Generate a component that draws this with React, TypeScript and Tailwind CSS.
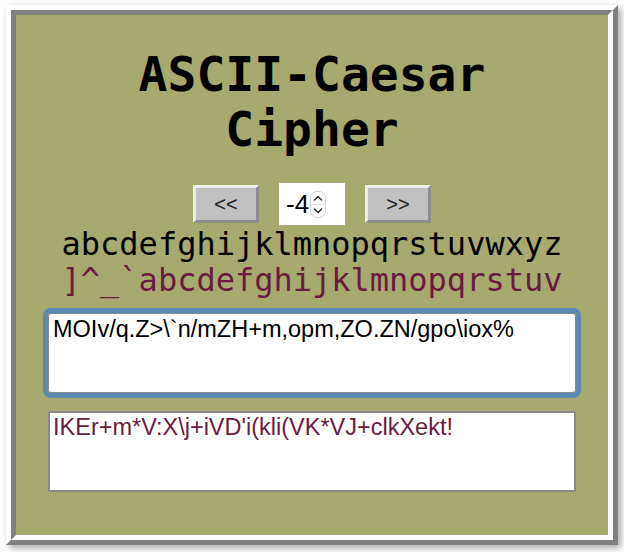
import React from 'react';

const plain = 'abcdefghijklmnopqrstuvwxyz';
const shifted = ']^_`abcdefghijklmnopqrstuv';
const input = 'MOIv/q.Z>\\`n/mZH+m,opm,ZO.ZN/gpo\\iox%';
const output = "IKEr+m*V:X\\j+iVD'i(kli(VK*VJ+clkXekt!";

const Spinner: React.FC = () => (
  <svg width="16" height="27" viewBox="0 0 16 27" fill="none">
    <rect x="0.5" y="0.5" width="15" height="26" rx="6.5" stroke="#d4d4d4" fill="#fff" />
    <line x1="1" y1="13.5" x2="15" y2="13.5" stroke="#e2e2e2" />
    <path d="M4.5 9 L8 5.5 L11.5 9" stroke="#333" strokeWidth="1.6" strokeLinecap="round" strokeLinejoin="round" />
    <path d="M4.5 18 L8 21.5 L11.5 18" stroke="#333" strokeWidth="1.6" strokeLinecap="round" strokeLinejoin="round" />
  </svg>
);

const ShiftButton: React.FC<{ label: string }> = ({ label }) => (
  <button className="w-[66px] h-[38px] bg-[#c0c0c0] border-[3px] border-t-[#ececec] border-l-[#ececec] border-r-[#8e8e8e] border-b-[#8e8e8e] text-[20px] text-[#222] font-['Liberation_Sans',Arial,sans-serif] flex items-center justify-center">
    {label}
  </button>
);

export default function App() {
  return (
    <div className="w-[624px] h-[552px] bg-white pt-[5px] pl-[6px]">
      {/* ridge frame */}
      <div className="w-[612px] h-[540px] border-[5px] border-t-white border-l-white border-r-[#808080] border-b-[#808080] shadow-[3px_3px_7px_rgba(0,0,0,0.35)]">
        <div className="w-full h-full border-[5px] border-t-[#808080] border-l-[#808080] border-r-white border-b-white bg-[#a6aa6e] flex flex-col items-center">
          <h1 className="mt-[32px] text-[48px] leading-[55px] font-bold text-center text-black font-['DejaVu_Sans_Mono',monospace]">
            ASCII-Caesar
            <br />
            Cipher
          </h1>

          <div className="mt-[26px] flex items-center gap-[20px] h-[42px]">
            <ShiftButton label="<<" />
            <div className="w-[66px] h-[42px] bg-white flex items-center pl-[7px] gap-[1px]">
              <span className="text-[26px] leading-none text-black font-['Liberation_Sans',Arial,sans-serif]">-4</span>
              <Spinner />
            </div>
            <ShiftButton label=">>" />
          </div>

          <div className="mt-[1px] text-[32px] leading-[36px] text-center font-['DejaVu_Sans_Mono',monospace]">
            <div className="text-black">{plain}</div>
            <div className="text-[#6a1b41]">{shifted}</div>
          </div>

          <textarea
            readOnly
            value={input}
            className="mt-[15px] w-[528px] h-[80px] resize-none bg-white border border-[#8a8a8a] outline-[5px] outline-solid outline-[#5b8bb3] rounded-[3px] px-[4px] py-[2px] text-[23.5px] leading-[27px] text-black font-['Liberation_Sans',Arial,sans-serif]"
          />

          <textarea
            readOnly
            value={output}
            className="mt-[18px] w-[528px] h-[81px] resize-none bg-white border-2 border-[#8a8a8a] px-[3px] py-[1px] text-[23.5px] leading-[27px] text-[#6a1b41] font-['Liberation_Sans',Arial,sans-serif] outline-none"
          />
        </div>
      </div>
    </div>
  );
}
